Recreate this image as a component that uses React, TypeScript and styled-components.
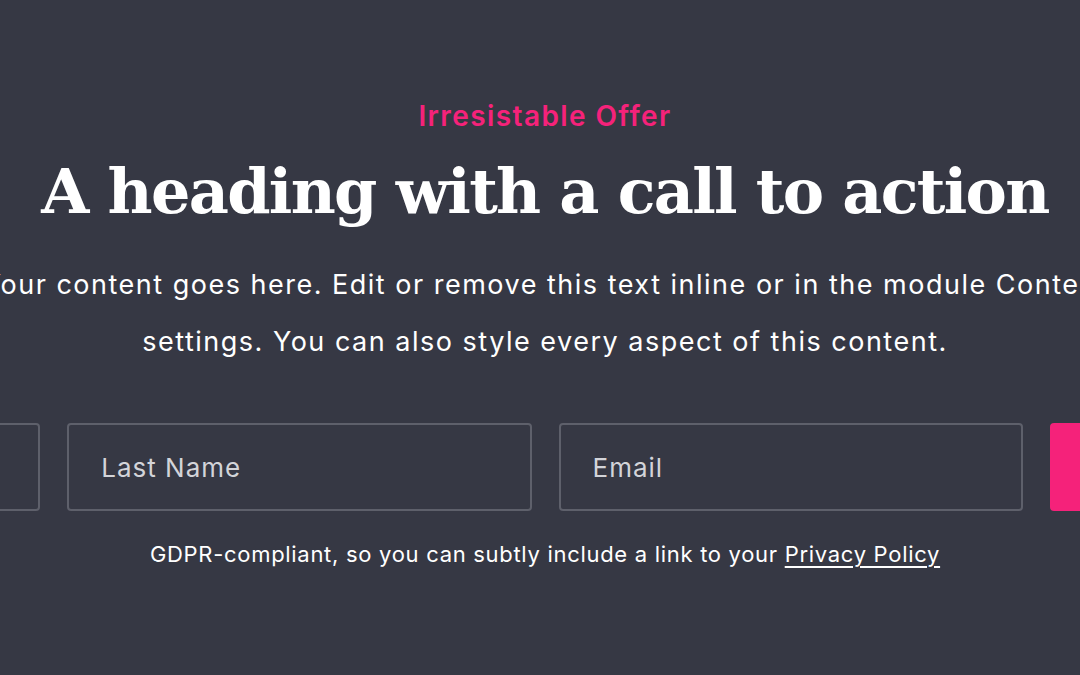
import { FC } from 'react';
import styled, { createGlobalStyle } from 'styled-components';

const GlobalStyle = createGlobalStyle`
  html, body {
    margin: 0;
    padding: 0;
    background: #363844;
    overflow: hidden;
  }
  body {
    font-family: Inter, "Noto Sans", sans-serif;
  }
`

const Page = styled.div`
  width: 1080px;
  height: 675px;
  overflow: hidden;
  background: #363844;
`

const Section = styled.section`
  width: 1938px;
  margin-left: -424px;
  padding-top: 98px;
  display: flex;
  flex-direction: column;
  align-items: center;
  text-align: center;
`

const Eyebrow = styled.div`
  color: #f5227a;
  font-size: 28px;
  font-weight: 600;
  line-height: 36px;
  letter-spacing: 1.4px;
`

const Heading = styled.h1`
  margin: 16px 0 0;
  color: #ffffff;
  font-family: "DejaVu Serif", "Liberation Serif", serif;
  font-weight: 700;
  font-size: 62px;
  line-height: 84px;
  letter-spacing: -1.7px;
`

const Lead = styled.p`
  margin: 22px 0 0;
  color: #ffffff;
  font-size: 27px;
  line-height: 57px;
  letter-spacing: 1.5px;
`

const Form = styled.form`
  margin-top: 53px;
  width: 100%;
  display: grid;
  grid-template-columns: repeat(4, minmax(0, 1fr));
  gap: 27px;
`

const Field = styled.input`
  box-sizing: border-box;
  width: 100%;
  min-width: 0;
  height: 88px;
  padding: 0 32px;
  background: transparent;
  border: 2px solid #5e606b;
  border-radius: 4px;
  color: #ffffff;
  font-family: inherit;
  font-size: 26px;
  letter-spacing: 1px;
  outline: none;
  &::placeholder {
    color: #d3d4d9;
  }
`

const Submit = styled.button`
  width: 100%;
  min-width: 0;
  height: 88px;
  border: none;
  border-radius: 4px;
  background: #f5227a;
  color: #ffffff;
  font-family: inherit;
  font-size: 26px;
  font-weight: 600;
`

const Note = styled.p`
  margin: 28px 0 0;
  color: #ffffff;
  font-size: 22px;
  line-height: 30px;
  letter-spacing: 0.7px;
`

const Link = styled.a`
  color: #ffffff;
  text-decoration: underline;
  text-underline-offset: 4px;
`

const App: FC = () => {
  return (
    <>
      <GlobalStyle />
      <Page>
        <Section>
          <Eyebrow>Irresistable Offer</Eyebrow>
          <Heading>A heading with a call to action</Heading>
          <Lead>
            Your content goes here. Edit or remove this text inline or in the module Content
            <br />
            settings. You can also style every aspect of this content.
          </Lead>
          <Form onSubmit={(e) => e.preventDefault()}>
            <Field placeholder="First Name" />
            <Field placeholder="Last Name" />
            <Field placeholder="Email" />
            <Submit type="submit">Subscribe</Submit>
          </Form>
          <Note>
            GDPR-compliant, so you can subtly include a link to your <Link href="#">Privacy Policy</Link>
          </Note>
        </Section>
      </Page>
    </>
  )
}

export default App;
